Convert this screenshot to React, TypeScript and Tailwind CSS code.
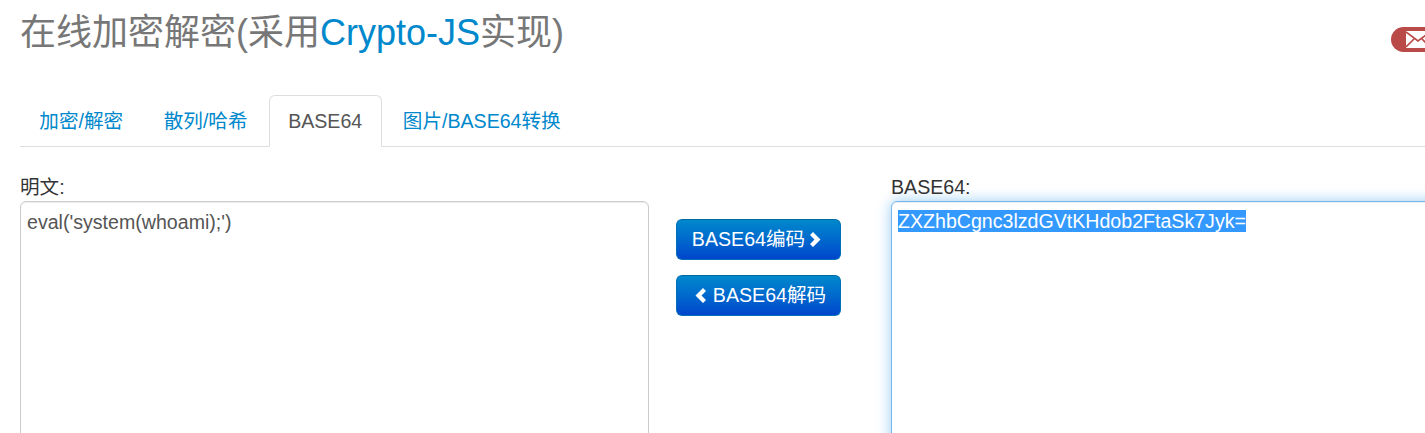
const FONT = "font-['Liberation_Sans','Noto_Sans_CJK_SC',sans-serif]";

const TABS = [
  { label: "加密/解密", active: false },
  { label: "散列/哈希", active: false },
  { label: "BASE64", active: true },
  { label: "图片/BASE64转换", active: false },
];

function Chevron({ left = false }: { left?: boolean }) {
  return (
    <svg viewBox="0 0 13 15" className="w-[13px] h-[15px] shrink-0">
      <polygon
        fill="white"
        points={left ? "12,3 9,0 1.5,7.5 9,15 12,12 7.5,7.5" : "1,3 4,0 11.5,7.5 4,15 1,12 5.5,7.5"}
      />
    </svg>
  );
}

function Envelope() {
  return (
    <svg viewBox="0 0 24 17" className="w-6 h-[17px] shrink-0">
      <rect width="24" height="17" fill="white" />
      <path d="M0 1 L12 10 L24 1 M0 16 L8.5 7.5 M24 16 L15.5 7.5" fill="none" stroke="#b94a48" strokeWidth="1.6" />
    </svg>
  );
}

function ActionButton({ className, children }: { className: string; children: React.ReactNode }) {
  return (
    <button
      className={`flex items-center justify-center w-[165px] h-[41px] rounded-[6px] border border-[#0070b8] border-t-[#00689f] bg-gradient-to-b from-[#0088cc] to-[#0044cc] text-white text-[19.6px] ${className}`}
    >
      {children}
    </button>
  );
}

export default function App() {
  return (
    <div className={`${FONT} w-[1425px] h-[433px] overflow-hidden bg-white pl-5`}>
      {/* Header */}
      <div className="flex h-[95px]">
        <h1 className="w-[1371px] shrink-0 pt-[13px] text-[36px] leading-[40px] text-[#777777]">
          在线加密解密(采用<span className="text-[#0088cc]">Crypto-JS</span>实现)
        </h1>
        <div className="mt-[27px] flex items-center h-[25px] w-[60px] shrink-0 rounded-full bg-[#b94a48] pl-[15px]">
          <Envelope />
        </div>
      </div>

      {/* Tabs */}
      <ul className="flex gap-[2px] h-[52px] border-b border-[#dddddd]">
        {TABS.map((tab) => (
          <li
            key={tab.label}
            className={`h-[52px] px-[18.3px] pt-[2px] flex items-center text-[19.6px] rounded-t-[6px] border ${
              tab.active
                ? "bg-white border-[#dddddd] border-b-white text-[#555555]"
                : "border-transparent text-[#0088cc]"
            }`}
          >
            {tab.label}
          </li>
        ))}
      </ul>

      {/* Content */}
      <div className="flex pt-[26px]">
        <div className="w-[629px] shrink-0">
          <div className="h-[28px] text-[19.6px] leading-[28px] text-[#333333]">明文:</div>
          <div className="h-[300px] rounded-[6px] border border-[#cccccc] px-[6px] py-[6px] text-[19.6px] leading-[28px] text-[#555555] shadow-[inset_0_1px_1px_rgba(0,0,0,0.075)]">
            eval('system(whoami);')
          </div>
        </div>

        <div className="w-[165px] shrink-0 ml-[27px] mt-[46px] flex flex-col gap-[15px]">
          <ActionButton className="gap-[4px] pr-[3px]">
            BASE64编码
            <Chevron />
          </ActionButton>
          <ActionButton className="gap-[6px] pl-[3px]">
            <Chevron left />
            BASE64解码
          </ActionButton>
        </div>

        <div className="w-[629px] shrink-0 ml-[50px]">
          <div className="h-[28px] text-[19.6px] leading-[28px] text-[#333333]">BASE64:</div>
          <div className="h-[300px] rounded-[6px] border border-[rgba(82,168,236,0.8)] px-[6px] py-[7px] text-[19.6px] leading-[24px] text-[#555555] shadow-[inset_0_1px_1px_rgba(0,0,0,0.075),0_0_14px_rgba(82,168,236,0.6)]">
            <span className="bg-[#3399ff] text-white">ZXZhbCgnc3lzdGVtKHdob2FtaSk7Jyk=</span>
          </div>
        </div>
      </div>
    </div>
  );
}
